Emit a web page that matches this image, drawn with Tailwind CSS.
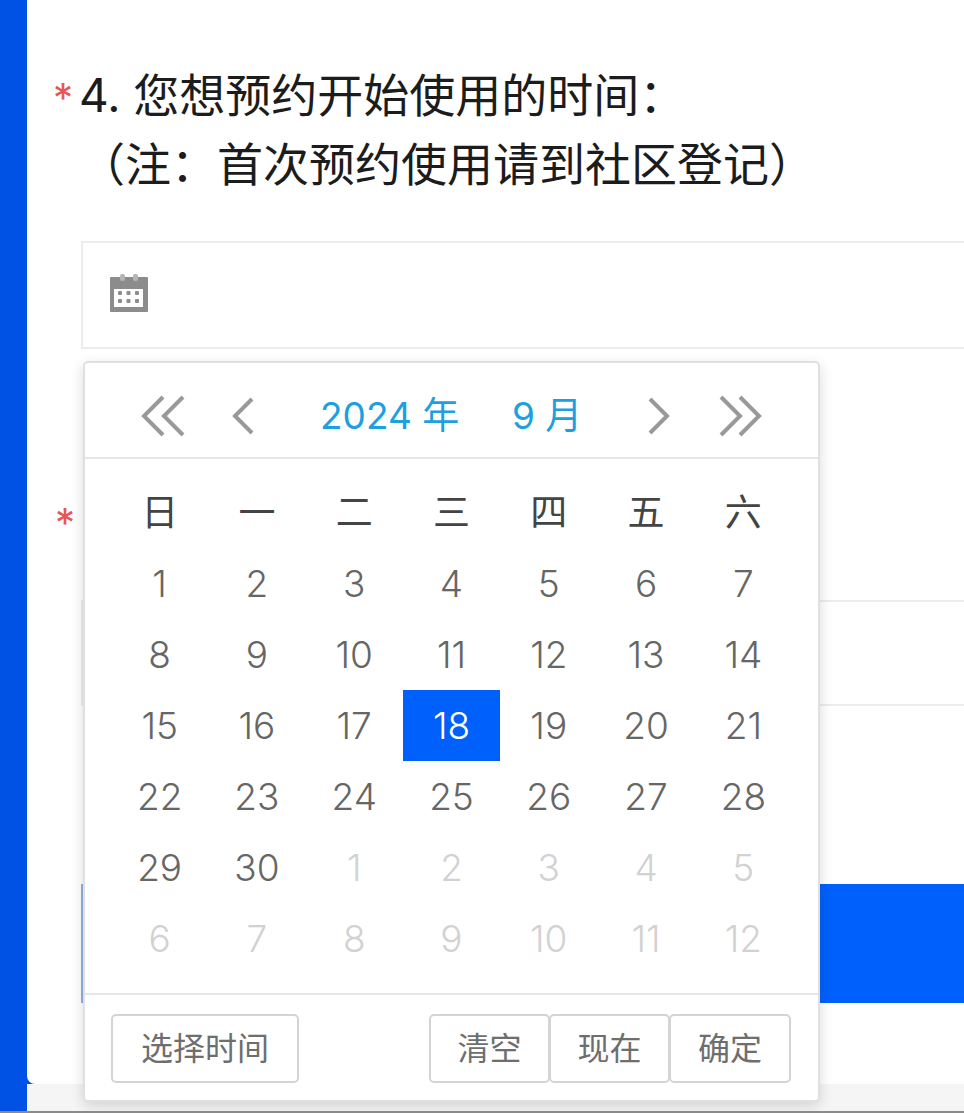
<!DOCTYPE html>
<html lang="zh-CN">
<head>
  <meta charset="UTF-8" />
  <title>预约时间</title>
  <script src="https://cdn.jsdelivr.net/npm/@tailwindcss/browser@4"></script>
</head>
<body class="bg-[#f5f5f5] h-[1113px] w-[964px] overflow-hidden font-['Inter','Noto_Sans_CJK_SC',sans-serif]">

  <div class="relative flex h-[1113px] border-b-2 border-[#8a8a8a] overflow-hidden">
    <div class="w-[27px] shrink-0 bg-[#0052e4]"></div>

    <div class="relative flex-1 h-[1084px]">
      <div class="absolute left-0 bottom-0 w-[8px] h-[8px] bg-[#0052e4]"></div>
      <div class="relative h-full bg-white rounded-bl-[8px] pl-[54px] pt-[61px]">
        <div class="relative -ml-[2px]">
          <span class="absolute left-[-26px] top-[2px] text-[40px] leading-[70px] text-[#e95555]">*</span>
          <h2 class="text-[46px] leading-[69px] text-[#1c1c1c]">4. 您想预约开始使用的时间：<br />（注：首次预约使用请到社区登记）</h2>
        </div>

        <div class="mt-[42px] mr-[-10px] h-[108px] border-2 border-[#ececec] flex items-center pl-[27px]">
          <svg class="w-[38px] h-[38px] -mt-[4px]" viewBox="0 0 38 38">
            <rect x="0" y="3" width="38" height="35" rx="1" fill="#8c8c8c" />
            <rect x="10" y="0" width="5" height="7" rx="2" fill="#b5b5b5" />
            <rect x="23" y="0" width="5" height="7" rx="2" fill="#b5b5b5" />
            <rect x="4" y="15" width="29" height="18" fill="#fff" />
            <g fill="#8c8c8c">
              <rect x="8" y="17" width="4" height="4" rx="1" /><rect x="16.500" y="17" width="4" height="4" rx="1" /><rect x="25" y="17" width="4" height="4" rx="1" />
              <rect x="8" y="25" width="4" height="4" rx="1" /><rect x="16.500" y="25" width="4" height="4" rx="1" /><rect x="25" y="25" width="4" height="4" rx="1" />
            </g>
          </svg>
        </div>

        <div class="relative mt-[251px] mr-[-10px] h-[106px] border-2 border-[#ececec]">
          <span class="absolute left-[-28px] top-[-114px] text-[40px] leading-[70px] text-[#e95555]">*</span>
        </div>

        <div class="mt-[178px] mr-[-10px] h-[119px] bg-[#0060fb] border-l-2 border-[#8fb0e8]"></div>
      </div>
    </div>

    <!-- date picker popup -->
    <div class="absolute left-[83px] top-[361px] w-[737px] h-[741px] bg-white rounded-[5px] border-2 border-[#e0e0e0] shadow-[0_4px_14px_rgba(0,0,0,0.14)] flex flex-col">
      <div class="h-[96px] shrink-0 border-b-2 border-[#e6e6e6] flex items-center pt-[12px]">
        <svg class="ml-[55px] w-[48px] h-[44px]" viewBox="0 0 48 44" fill="none" stroke="#999" stroke-width="4">
          <path d="M23 3 4 22l19 19M43 3 24 22l19 19" />
        </svg>
        <svg class="ml-[44px] w-[26px] h-[40px]" viewBox="0 0 26 40" fill="none" stroke="#999" stroke-width="4">
          <path d="M20 3 3 20l17 17" />
        </svg>
        <span class="ml-[62px] w-[192px] text-[37px] leading-[50px] text-[#1e9fe0] whitespace-nowrap">2024 年</span>
        <span class="w-[100px] text-[37px] leading-[50px] text-[#1e9fe0] whitespace-nowrap">9 月</span>
        <svg class="ml-[35px] w-[26px] h-[40px]" viewBox="0 0 26 40" fill="none" stroke="#999" stroke-width="4">
          <path d="M3 3l17 17L3 37" />
        </svg>
        <svg class="ml-[43px] w-[48px] h-[44px]" viewBox="0 0 48 44" fill="none" stroke="#999" stroke-width="4">
          <path d="M5 3l19 19L5 41M24 3l19 19-19 19" />
        </svg>
      </div>

      <div class="px-[26px] pt-[18px] grid grid-cols-7 auto-rows-[71px] w-full text-center text-[37px] leading-[71px] font-light text-[#666] h-[534px] shrink-0">
        <span class="font-normal text-[#444]">日</span><span class="font-normal text-[#444]">一</span><span class="font-normal text-[#444]">二</span><span class="font-normal text-[#444]">三</span><span class="font-normal text-[#444]">四</span><span class="font-normal text-[#444]">五</span><span class="font-normal text-[#444]">六</span>
        <span>1</span><span>2</span><span>3</span><span>4</span><span>5</span><span>6</span><span>7</span>
        <span>8</span><span>9</span><span>10</span><span>11</span><span>12</span><span>13</span><span>14</span>
        <span>15</span><span>16</span><span>17</span><span class="bg-[#0060fb] text-white">18</span><span>19</span><span>20</span><span>21</span>
        <span>22</span><span>23</span><span>24</span><span>25</span><span>26</span><span>27</span><span>28</span>
        <span>29</span><span>30</span><span class="text-[#d2d2d2]">1</span><span class="text-[#d2d2d2]">2</span><span class="text-[#d2d2d2]">3</span><span class="text-[#d2d2d2]">4</span><span class="text-[#d2d2d2]">5</span>
        <span class="text-[#d2d2d2]">6</span><span class="text-[#d2d2d2]">7</span><span class="text-[#d2d2d2]">8</span><span class="text-[#d2d2d2]">9</span><span class="text-[#d2d2d2]">10</span><span class="text-[#d2d2d2]">11</span><span class="text-[#d2d2d2]">12</span>
      </div>

      <div class="flex-1 border-t-2 border-[#e6e6e6] pl-[26px] pr-[27px] pt-[19px] flex text-[32px] text-[#6e6e6e]">
        <button class="w-[188px] h-[69px] border-2 border-[#d4d4d4] rounded-[5px]">选择时间</button>
        <div class="ml-auto flex">
          <button class="w-[121px] h-[69px] border-2 border-[#d4d4d4] rounded-[5px]">清空</button>
          <button class="w-[121px] h-[69px] border-2 border-[#d4d4d4] rounded-[5px] -ml-[1px]">现在</button>
          <button class="w-[122px] h-[69px] border-2 border-[#d4d4d4] rounded-[5px] -ml-[1px]">确定</button>
        </div>
      </div>
    </div>
  </div>

</body>
</html>
